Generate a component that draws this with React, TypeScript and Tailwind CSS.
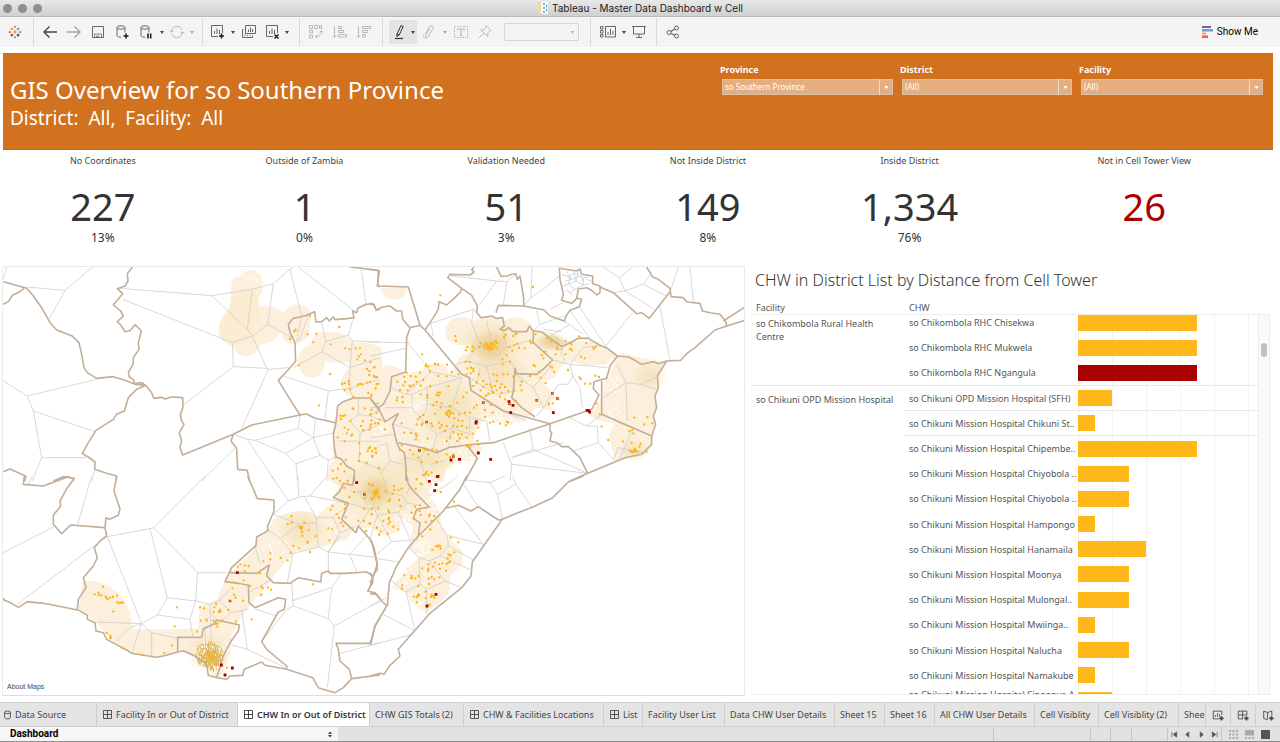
import type { ReactNode } from 'react';

type Kpi = { label: string; value: string; share?: string; alert?: boolean };
const KPIS: Kpi[] = [
  { label: 'No Coordinates', value: '227', share: '13%' },
  { label: 'Outside of Zambia', value: '1', share: '0%' },
  { label: 'Validation Needed', value: '51', share: '3%' },
  { label: 'Not Inside District', value: '149', share: '8%' },
  { label: 'Inside District', value: '1,334', share: '76%' },
  { label: 'Not in Cell Tower View', value: '26', alert: true },
];

type Row = { name: string; units: number; facility?: string; span?: number; alert?: boolean; rule?: boolean };
const ROWS: Row[] = [
  { facility: 'so Chikombola Rural Health Centre', span: 3, name: 'so Chikombola RHC Chisekwa', units: 7 },
  { name: 'so Chikombola RHC Mukwela', units: 7 },
  { name: 'so Chikombola RHC Ngangula', units: 7, alert: true, rule: true },
  { facility: 'so Chikuni OPD Mission Hospital', span: 13, name: 'so Chikuni OPD Mission Hospital (SFH)', units: 2, rule: true },
  { name: 'so Chikuni Mission Hospital Chikuni St..', units: 1, rule: true },
  { name: 'so Chikuni Mission Hospital Chipembe..', units: 7 },
  { name: 'so Chikuni Mission Hospital Chiyobola ..', units: 3 },
  { name: 'so Chikuni Mission Hospital Chiyobola ..', units: 3 },
  { name: 'so Chikuni Mission Hospital Hampongo', units: 1 },
  { name: 'so Chikuni Mission Hospital Hanamaila', units: 4 },
  { name: 'so Chikuni Mission Hospital Moonya', units: 3 },
  { name: 'so Chikuni Mission Hospital Mulongal..', units: 3 },
  { name: 'so Chikuni Mission Hospital Mwiinga..', units: 1 },
  { name: 'so Chikuni Mission Hospital Nalucha', units: 3 },
  { name: 'so Chikuni Mission Hospital Namakube', units: 1 },
  { name: 'so Chikuni Mission Hospital Singonya A', units: 2 },
];

/* ---------- map data: four tiles, each in thirds of a pixel ---------- */

type Tile = { x: number; y: number; borders: string; cells: string; sites: string; far: string; edge: string };

const NORTH_WEST: Tile = {
  x: 0,
  y: 260,
  borders:
    'M10 62L80 82L100 105L125 140L150 185L170 207L215 224L237 245L245 280L252 320L262 335L290 352L340 347L375 358L405 370L437 373M10 130L25 122L38 102L60 92L72 82M397 18L382 38L384 60L375 75L352 83L368 98L340 132L362 150L370 165L352 182L362 192L375 212L390 209L405 191L424 210L415 245L417 265L400 290L400 308L385 335L388 348L400 355L404 368L425 365L437 373L455 395L461 412L485 409L495 414L515 408L548 410L549 440L541 460L545 480L552 490L538 515L545 540L540 560L548 582L700 520L755 492L900 462M437 373L410 385L385 410L373 450L350 460L340 475L288 508L265 545L247 578L265 588L285 603L284 625L320 637L350 645L348 660M10 632L30 624L78 646L74 660M160 660L190 647L222 652L220 660M1050 18L1135 28L1133 75L1140 77M1140 145L1130 147L1118 128L1098 130L1073 142L1070 155L1058 150L1062 170L1040 173L1005 176L1000 168L988 180L980 170L965 182L948 183L944 152L915 165L880 172L865 190L870 215L885 245L887 300L875 315L835 358L868 412L900 462L920 459L945 472L975 478L1008 486M1140 452L1110 411L1060 411L1030 422L1013 435L1008 486L1000 520L1003 560L1008 588L1025 595L1040 615L1063 628L1063 660M700 520L693 540L710 562L713 625L742 628L748 660',
  cells:
    'M10 55L20 18M278 18L195 88L147 175M80 78L195 88M360 82L635 104L745 208L757 225L697 245L368 115M635 104L757 85L742 205M757 85L820 68L803 190L757 225L800 322L700 317L697 245M803 190L875 230M820 68L870 25L880 18M870 25L905 165L930 160M895 18L1063 150M1083 18L1098 130M700 317L550 432M800 322L805 325L725 502M805 325L865 320M10 360L82 405L290 355M82 405L100 450L285 512M100 450L125 590L260 590M125 590L97 660M284 628L275 660M850 345L985 390L1050 382M985 390L975 475M965 185L977 242L967 272L1050 320L1057 240L1045 222L1060 172M977 242L1045 222M967 272L880 320M1057 240L1140 243M1050 320L1140 290M1050 320L1048 382L1060 411M700 520L742 535L765 538L895 502L940 530L857 577L765 538M742 535L825 660M900 462L895 502M947 475L940 530L960 583L888 608L857 577M888 608L893 660M940 530L1000 515M960 583L985 597L1008 588M985 597L980 660M705 562L605 660M1048 382L1140 355M1075 411L1075 460L1050 480L1080 515L1140 490M1075 460L1105 465L1140 445M1013 540L1140 541M1080 515L1078 600L1140 625M905 165L890 240M925 165L895 245',
  sites:
    '930,164 882,211 887,207 922,220 949,218 940,244 870,234 1018,198 992,250 896,313 990,339 957,433 1036,262 1049,265 1067,262 1080,262 1077,286 1083,280 1072,295 1095,298 1111,304 1101,324 1108,330 1108,342 1123,319 1125,349 1131,348 1046,360 1034,366 1026,369 1047,369 1074,370 1081,368 1088,370 1101,365 1110,363 1130,369 1127,382 1034,388 1051,385 1061,408 1105,396 1115,402 1113,406 1133,427 1058,442 1060,444 1094,442 1114,447 1111,461 1021,464 1028,465 1034,463 1023,474 1051,480 1089,481 1115,478 1134,486 1034,500 1044,506 1083,495 1090,507 1111,497 1109,506 1041,517 1057,520 1054,524 1013,529 1034,541 1077,547 1110,558 1106,562 1127,563 1103,570 1128,575 1080,578 1117,585 1077,600 1100,606 1037,596 1023,609 1014,623 998,629 1034,631 1010,651 1137,621',
  far: '',
  edge: '',
};

const NORTH_EAST: Tile = {
  x: 370,
  y: 260,
  borders:
    'M0 25L28 30L22 75L115 78L150 193L165 207M150 193L120 200M0 130L12 130L18 147L38 138L60 135L80 150L95 150L98 175L120 200L110 230L107 333L65 347L60 390L40 430L25 440L0 412M312 18L305 26L312 33L300 42L240 40L233 50L275 82L272 92L255 110L230 132L207 122L205 145L190 170L165 207L275 340L298 350L303 388L400 450L540 488M275 82L305 103L322 135L320 155L333 170L365 165L378 172L398 170L403 195L390 205L405 208L415 200L430 212L470 212L478 196L490 210L490 245L548 297L525 320L500 340L440 338L435 322L430 390L425 410L455 440L495 468M380 18L393 46L412 45L425 40L437 38L442 55L450 45L461 110L461 135M378 155L385 133L461 135L522 147L540 165L583 180L588 165L600 148L628 137L635 115L620 112L605 127L575 118L580 100L570 55L568 22L620 30L630 24L635 40L668 45L668 68L690 75L690 95L680 102L668 90L650 80L625 84L620 112M690 78L730 95L800 158L815 155L838 172L900 92M830 18L848 48L862 53L900 82L903 107L940 110L950 122L970 125L990 127L997 150L1020 155L1050 160L1068 182L1070 195L1125 178M1060 180L1125 138M1070 195L1035 207L975 260L950 278L932 298L890 300L862 345L865 380L855 405L860 440L850 465L857 490L845 525L845 550L815 580L765 590L653 637L600 660M490 210L515 213L545 235L575 257L600 245L625 232L655 232L690 253L712 262L742 285L775 288L795 298L815 310L850 302L865 308L890 300M742 285L720 315L710 352L672 362L670 383L687 402L665 445L650 450L540 488L370 545L290 552L235 560L200 575L165 562L85 545M695 355L695 460L845 525M540 488L540 510L545 515L540 540L560 545L575 557L595 557L630 590L653 637M290 552L322 592L285 660M25 440L45 482L85 458L68 490L80 545L90 565L103 575L108 620L108 660',
  cells:
    'M0 243L107 245M0 285L107 262M110 240L183 333L275 350M183 333L107 400L65 380M180 188L310 145L320 155M183 188L190 225M310 145L305 185M245 45L380 60L330 130M380 60L410 62L437 40M410 62L400 133M487 18L482 110L461 135M482 110L520 85L555 55L568 45M540 145L580 125M700 18L748 50L765 90L730 95M748 50L785 20M765 90L820 70L840 40M820 70L890 105M765 90L850 143M903 85L925 18M960 18L970 125M870 135L900 298M788 155L705 258M628 137L712 262M600 150L660 232M583 180L640 220M500 150L510 190L490 210M510 190L583 165M540 225L600 190M520 205L575 212M305 185L330 250L290 300L257 310M290 300L350 315L420 300L435 322M350 315L370 395L340 410M400 205L410 260L375 290L330 250M350 180L365 250M410 260L490 235M330 320L320 370M548 297L600 310L712 320M600 310L608 345L595 370L565 370L520 440L500 465M608 345L630 380L637 440M690 253L640 260L600 310M560 250L585 300M740 310L768 365L810 370L858 350M768 365L700 410M768 365L772 480M810 370L858 385M107 400L127 400L125 440L150 470L170 450L172 380L127 400M172 380L275 350L245 440L172 430M245 440L300 470L298 520L245 500L200 520L150 470M300 470L350 480L360 540M245 500L235 560M298 350L380 400L440 390M435 340L490 380L520 440M490 380L548 310M70 490L125 505L150 545M0 465L45 482M0 440L25 440M125 440L45 440M200 520L190 565M420 455L470 480M400 545L425 610L420 660M425 610L653 637M425 590L580 545M478 500L490 565L653 637M425 590L490 565M600 470L650 495L682 495L685 545L735 600M650 495L695 460M685 545L610 570M750 590L790 500L745 485M730 595L745 560L820 575M345 420L440 470M165 565L150 600L170 660M225 600L180 610M108 590L150 600M0 530L75 520M20 560L50 545L60 600L100 610M60 600L30 640M575 40L600 48L612 35L640 50L655 48M600 48L595 70L578 75M595 70L615 85L640 72L640 50M612 35L618 60L595 70M618 60L640 72L660 68M600 95L615 85M590 30L605 55L585 60M625 30L618 60M588 85L610 105M650 55L668 62M605 55L630 45L640 60',
  sites:
    '211,103 489,78 256,225 258,239 157,280 397,208 407,221 402,228 437,219 440,217 418,258 427,269 433,252 292,258 288,268 308,256 312,262 307,270 497,220 484,246 480,240 488,244 531,232 543,240 515,282 520,292 526,272 560,260 575,265 563,265 601,246 605,250 587,241 601,264 606,268 627,226 630,230 649,247 670,260 678,257 672,263 557,280 586,280 633,287 644,292 541,316 547,320 594,327 491,312 495,316 628,349 632,354 676,344 687,348 661,368 645,368 506,333 512,350 480,345 527,366 455,362 452,373 455,388 553,332 169,310 175,316 167,316 195,309 204,311 231,311 180,330 287,303 300,303 292,322 303,320 310,323 310,330 290,340 302,337 326,340 398,310 420,302 410,283 397,295 370,340 380,343 400,340 413,340 430,347 360,370 365,378 340,378 320,365 332,388 380,388 390,380 405,378 395,370 355,397 367,392 370,395 348,403 330,405 390,407 380,360 432,387 405,415 362,432 420,430 103,347 110,335 122,345 137,347 150,335 160,357 140,363 100,373 119,374 122,377 130,372 152,374 105,363 82,362 205,345 230,346 245,333 265,340 235,376 180,375 90,387 113,388 172,402 203,395 207,403 210,395 200,402 152,400 82,410 97,408 98,423 80,418 173,410 190,432 200,423 215,427 262,425 280,408 290,395 195,458 212,440 240,435 235,450 240,460 228,456 250,457 237,467 233,455 238,448 243,454 231,462 268,460 285,455 300,455 253,472 265,478 277,480 312,440 320,432 345,447 368,455 160,462 150,468 143,475 140,490 157,487 155,492 183,487 187,495 207,485 215,492 210,500 230,495 225,510 250,495 262,497 276,495 290,500 250,513 265,520 275,520 270,532 262,540 240,530 230,540 290,530 308,518 325,500 322,540 95,487 103,515 138,518 140,525 137,535 123,516 173,533 95,553 90,567 120,567 295,552 300,560 290,555 303,552 325,550 410,482 408,493 415,485 390,488 370,482 345,468 360,485 793,470 832,468 847,487 823,490 715,537 759,541 785,545 812,548 808,557 790,573 797,570 785,572 802,572 795,563 780,570 792,568 830,572 778,510 790,517 787,507 680,428 690,460 695,497 537,428 548,427 565,415 536,430 3,460 3,490 20,455 30,475 25,487 45,505 15,487 15,562 7,570 18,575 7,587 27,622 12,345 17,382 25,368 13,318 165,565 150,570 187,565 200,568 160,562 172,567 145,590 130,580 155,603 200,603 175,580 230,580 240,588 170,632 165,640 175,642 185,635 160,642 168,637 108,627 140,655 250,580 205,645 352,250 358,255 345,252 350,262 356,262 362,258 367,252 372,245 366,262 360,248 378,240 381,246 348,247 342,256 370,262 358,268 353,256 374,254 363,265 328,258 333,247 380,262 365,247 447,260 442,248 465,262 430,225 438,420 415,390 395,395 340,360 350,370 310,375 375,375',
  far: '417,422 429,433 422,455 550,455 319,482 318,486 325,576 362,595 243,597 269,595 268,595 205,646 651,448 656,449 659,453',
  edge: '340,425 500,418 547,397 562,412 170,483 148,568 250,587 418,428',
};

const SOUTH_WEST: Tile = {
  x: 0,
  y: 475,
  borders:
    'M73 0L70 25L130 30L205 2L222 8L202 35L180 75L182 90L160 118L160 145L185 173L212 147L315 155L318 125L328 130L355 118L360 98L342 45L348 10L350 0M315 155L320 180L300 195L283 215L292 245L280 270L250 305L258 335L235 370L232 400L262 418L262 430L285 440L288 465L310 470L320 490L385 525L395 532L430 538L470 544L500 538L533 528L533 484L605 484L610 458L640 445L650 432L718 447L715 465L690 500L670 540L650 605M10 365L12 372L35 382L55 394L82 377L130 382L200 395L232 402M533 528L550 524L585 540L620 565L625 598L650 605L680 610L690 600L728 598L733 580L785 558L795 568L860 580L885 588L938 605L955 635L1005 650L1030 635L1055 608L1140 597M743 0L772 68L822 72L822 105L803 150L803 165L770 183L768 208L695 275L675 317L715 322L745 328L747 380L765 395L800 380L835 365L857 370L853 400L835 408L785 497L800 520L860 570L860 580M685 290L770 292L808 267L800 300L820 320L870 322L895 305L962 318L965 292L985 285L990 292L1035 292L1100 288L1120 300M1055 608L1048 580L1020 555L1015 520L1008 502L1113 502L1125 450L1140 425M1062 0L1058 28L1030 22L1020 45L1000 65L1045 82L1025 130L1068 170L1075 150L1115 195L1130 260L1132 280L1118 300L1118 320L1103 345L1125 350L1140 370',
  cells:
    'M10 230L160 153M52 385L315 185M275 0L233 145M97 0L85 25M615 0L460 155L450 158L322 182L425 443L290 438M450 158L502 365L472 417L425 443L455 470L455 540M460 155L593 290L587 375L502 365M593 290L680 290M587 375L630 385L660 372L690 340M587 375L570 430L472 417M570 430L578 480M425 443L390 455L350 495M425 443L397 528M455 470L533 487M660 372L692 410L660 440L630 410L630 385M692 410L745 400M725 402L742 520L690 505M742 520L855 575M630 410L635 530M615 450L618 540M815 0L865 75L820 115M865 75L897 63L893 0M897 63L930 60L1045 82M930 60L980 0M820 115L900 145L948 140M900 145L840 187L803 160M915 65L948 125L955 213L878 233L840 187M948 125L1000 125L1035 95M1000 125L1020 170L985 228L955 213M1020 170L1068 150M878 233L862 320M985 228L985 290M985 228L1048 235L1100 180M985 228L1020 180M1048 235L1070 285M1048 235L1120 243M875 320L880 390L860 400L790 490M880 390L985 428L1003 450L1140 375M875 375L995 335L1025 292M995 335L985 428M1003 450L982 635M1018 533L1140 500M765 210L780 265M768 400L830 420M745 350L815 310M1045 82L1110 100L1140 90M1075 40L1105 95M1110 100L1075 150M1062 50L1140 40',
  sites:
    '1000,8 1020,15 1043,15 1033,35 997,90 992,101 875,120 863,145 875,140 913,140 904,155 907,152 901,155 899,152 904,159 906,168 926,163 907,180 946,181 985,157 996,160 988,193 922,197 924,200 880,210 897,217 930,228 872,230 863,253 842,246 811,232 811,250 790,256 721,265 735,268 746,270 713,272 734,286 775,290 780,292 702,319 731,313 750,330 697,337 702,356 707,365 729,374 785,332 788,337 804,335 813,341 782,358 785,355 531,394 524,451 600,394 612,397 648,384 643,394 660,402 662,406 656,408 641,408 685,402 602,434 620,431 620,434 640,434 667,433 652,442 648,444 652,452 708,436 755,430 591,467 516,508 493,531 425,536 367,516 320,471 331,479 330,486 332,486 309,332 284,355 296,350 296,358 304,358 317,362 320,366 330,365 339,363 351,359 323,370 351,379 358,381 363,380 368,380 340,406 939,325 681,575 1062,48 1048,63 1035,85 1107,24 1117,28 1095,67 1115,68 1125,55 1130,50 1137,65 1093,98 1115,115 1075,134 1092,135 1108,142 1131,155 1098,165 1137,175 1010,115 1017,126 1037,124 1035,98 1030,150 1023,140 625,540 632,545 630,535 638,542 640,535 645,548 615,535 636,552',
  far: '1070,20 712,290 664,567 697,576 675,597',
  edge: '1093,55 690,375',
};

const SOUTH_EAST: Tile = {
  x: 370,
  y: 475,
  borders:
    'M0 190L12 215L22 265L10 300L0 333M0 290L8 305L0 320M0 353L20 355L35 375L50 390L15 450L0 505M110 0L115 25L130 45L178 93L140 100L130 128L150 140L145 180M290 0L270 40L220 105L145 180L115 215L80 270L58 320L52 390M230 96L265 88L303 105L325 92L385 132L397 130L440 112L490 92L548 65L595 18L640 0M397 130L307 258L303 300L275 335L180 412L85 520L90 540L60 568L42 595L30 592L0 600',
  cells:
    'M290 12L360 20L405 0M360 20L383 55L397 130M383 55L438 25L485 92M428 0L438 25M280 25L325 92M253 92L340 205L232 178L200 130M232 178L235 210L310 252M235 210L210 240L302 282M210 240L178 255L225 315L275 335M178 255L147 245L115 215M147 245L150 325L170 340L225 315M170 340L170 415M150 325L108 347L65 315M108 347L135 465L40 415M0 508L130 475M0 390L50 365M20 235L65 197L145 190M22 118L65 197M22 118L0 190M22 118L85 108L110 80L150 88M85 108L120 190M22 248L85 258M110 80L100 60L50 50L40 0M22 118L0 60M175 60L240 20L262 0M110 55L120 30',
  sites:
    '8,28 10,50 15,45 20,42 23,48 17,55 25,60 22,52 12,62 7,70 17,48 13,55 47,45 72,30 73,42 85,43 95,38 60,70 57,75 68,53 87,72 91,90 25,98 55,103 57,108 5,98 5,115 1,143 40,135 55,130 55,143 60,137 57,125 20,155 32,166 28,176 70,152 85,160 53,173 140,10 155,25 137,38 152,23 212,48 252,77 135,92 150,88 125,110 148,105 152,117 177,120 180,115 193,120 130,127 167,138 185,135 181,160 157,181 242,185 265,199 187,221 197,211 205,208 203,212 210,210 212,218 235,235 240,238 233,247 253,229 242,238 240,257 235,260 230,264 195,260 207,265 217,262 190,272 175,265 157,277 175,278 174,284 210,278 228,284 103,298 124,300 123,307 126,307 136,307 146,300 176,308 185,303 193,310 208,304 177,324 145,330 97,328 96,338 167,347 145,355 147,358 140,363 131,362 143,360 167,367 185,357 190,360 183,363 193,365 140,379 179,386 208,2',
  far: '178,16 202,2 198,26 194,44 198,355 171,390',
  edge: '',
};

const TILES = [NORTH_WEST, NORTH_EAST, SOUTH_WEST, SOUTH_EAST];

const COVERAGE: { x: number; y: number; d: string }[] = [
  {
    x: 0,
    y: 260,
    d: 'M695 65Q700 40 725 45Q730 25 755 28Q790 32 788 70Q795 90 775 110L778 135Q820 130 848 155Q880 118 920 138Q940 160 930 190Q935 235 905 240Q880 260 855 240Q845 225 843 210Q820 250 780 250Q770 288 735 286Q705 280 695 255Q650 240 655 200Q662 165 685 145Q695 110 692 90ZM893 300Q900 258 930 250Q940 208 990 212Q1040 212 1057 245Q1110 240 1145 262L1145 660L985 660Q980 615 1000 600L1000 490Q1010 430 1045 420L1055 408Q1020 395 1022 360Q1030 335 1048 320L1045 303Q1010 310 975 300Q975 350 930 350Q895 340 893 300Z',
  },
  {
    x: 370,
    y: 260,
    d: 'M32 82L112 82Q105 115 75 116Q38 115 32 82ZM0 250Q35 255 37 290L37 318Q65 305 90 325L107 340L160 325Q180 300 210 305Q235 318 238 340L262 310L265 290L300 275Q300 255 300 248Q260 262 232 235Q215 200 240 180Q275 155 310 180Q360 150 398 180Q440 155 485 190L490 205Q540 205 580 240L680 240L740 282L710 310L650 315L600 300L570 320L555 350L520 360L575 430L560 450L500 440L460 480L410 495L350 470L320 500L310 540L340 560L320 600L260 600L230 625L220 662L0 662ZM742 285Q760 265 785 285L885 303L862 345L865 380L855 405L860 440L850 465L855 490L845 550L815 580L735 600L718 520L735 485L690 480L655 465L690 420L697 370L715 345Z',
  },
  {
    x: 0,
    y: 475,
    d: 'M983 0L1145 0L1145 150L1060 160L1040 190L960 215L885 228L845 270L800 330L760 375L720 430L695 480L690 540L660 605L640 605L620 565L585 540L540 520L500 540L400 536L340 500L290 440L235 400L250 315Q300 310 340 340Q390 370 398 460L540 460L595 455L598 390L650 372L670 320L720 265L765 215L770 185L803 170L820 130Q860 105 910 105Q940 110 950 120Q990 80 1020 75L1000 62L1020 30Q990 20 983 0Z',
  },
  {
    x: 370,
    y: 475,
    d: 'M0 0L195 0L175 60L210 100L215 150L238 190L278 225L278 265L240 300L238 350L200 390L165 410L118 375L110 350L65 335L95 300L110 275L150 245L115 215L130 150L100 130L85 165L50 180L0 155Z',
  },
];

/* centre, spread and number of specks in a cluster */
type Cluster = [number, number, number, number, number];

/* bare patches inside the coverage */
const GAPS: Cluster[] = [
  [418, 405, 12, 6, 40],
  [500, 420, 22, 8, 120],
  [563, 378, 22, 12, 90],
  [590, 392, 14, 16, 90],
  [575, 402, 16, 9, 80],
  [613, 383, 12, 9, 50],
  [612, 410, 8, 10, 34],
  [470, 458, 14, 9, 80],
  [436, 505, 12, 10, 60],
  [420, 545, 10, 10, 70],
  [402, 575, 10, 14, 50],
  [412, 600, 10, 9, 34],
  [404, 518, 9, 8, 40],
  [380, 428, 8, 8, 24],
  [275, 545, 14, 10, 26],
  [200, 645, 10, 6, 14],
  [226, 655, 5, 16, 20],
  [455, 445, 15, 10, 60],
  [248, 276, 16, 8, 40],
];

const OVERLAPS: Cluster[] = [
  [209, 654, 14, 13, 420],
  [212, 661, 7, 9, 90],
];

function specks(clusters: Cluster[]): string {
  let state = 11;
  const next = () => {
    state = (state + 0x6d2b79f5) | 0;
    let t = Math.imul(state ^ (state >>> 15), 1 | state);
    t = (t + Math.imul(t ^ (t >>> 7), 61 | t)) ^ t;
    return ((t ^ (t >>> 14)) >>> 0) / 4294967296;
  };
  return clusters
    .map(([x, y, rx, ry, n]) =>
      Array.from({ length: n }, () => {
        const angle = next() * Math.PI * 2;
        const reach = Math.pow(next(), 0.6);
        return `M${Math.round(x + Math.cos(angle) * rx * reach)} ${Math.round(y + Math.sin(angle) * ry * reach)}h1`;
      }).join(''),
    )
    .join('');
}

const HEAT: [number, number, number, number, string][] = [
  [491, 345, 22, 17, 'url(#heat-mid)'],
  [491, 345, 34, 28, 'url(#heat-low)'],
  [552, 341, 18, 9, 'url(#heat-mid)'],
  [450, 412, 34, 40, 'url(#heat-low)'],
  [500, 372, 32, 22, 'url(#heat-low)'],
  [376, 491, 18, 17, 'url(#heat-mid)'],
  [380, 488, 50, 32, 'url(#heat-low)'],
  [302, 528, 26, 20, 'url(#heat-low)'],
  [650, 375, 18, 15, 'url(#heat-low)'],
  [634, 450, 16, 12, 'url(#heat-low)'],
  [425, 460, 34, 16, 'url(#heat-low)'],
  [209, 652, 24, 20, 'url(#heat-low)'],
];

const dots = (list: string) =>
  list
    .split(' ')
    .filter(Boolean)
    .map((p) => `M${p.replace(',', ' ')}h0.01`)
    .join('');

const place = (t: { x: number; y: number }) => `translate(${t.x} ${t.y}) scale(0.33333)`;

function CoverageMap() {
  return (
    <svg viewBox="3 266 741 428" className="block h-auto w-full" role="img" aria-label="Map of community health workers and cell tower coverage">
      <defs>
        <radialGradient id="heat-low">
          <stop offset="0" stopColor="#ecd193" stopOpacity="0.45" />
          <stop offset="0.6" stopColor="#ecd193" stopOpacity="0.25" />
          <stop offset="1" stopColor="#ecd193" stopOpacity="0" />
        </radialGradient>
        <radialGradient id="heat-mid">
          <stop offset="0" stopColor="#dcb04c" stopOpacity="0.6" />
          <stop offset="0.6" stopColor="#dfb968" stopOpacity="0.35" />
          <stop offset="1" stopColor="#e2c27a" stopOpacity="0" />
        </radialGradient>
      </defs>
      {COVERAGE.map((c) => (
        <path key={`${c.x}-${c.y}`} d={c.d} transform={place(c)} fill="#fcf0dc" />
      ))}
      <path d="M234 290L256 290L259 312L252 335L238 344L222 338L220 322L230 308Z" fill="#fbecd2" />
      {HEAT.map(([cx, cy, rx, ry, fill], i) => (
        <ellipse key={i} cx={cx} cy={cy} rx={rx} ry={ry} fill={fill} />
      ))}
      <path d={specks(OVERLAPS)} stroke="#d3a12c" strokeOpacity="0.7" strokeWidth="1.6" />
      <ellipse cx="566" cy="380" rx="12" ry="10" fill="#fff" />
      <ellipse cx="579" cy="391" rx="12" ry="13" fill="#fff" />
      <ellipse cx="562" cy="404" rx="12" ry="8" fill="#fff" />
      <path d={specks(GAPS)} stroke="#fff" strokeWidth="1.4" />
      {TILES.map((t) => (
        <path key={`c${t.x}-${t.y}`} d={t.cells} transform={place(t)} fill="none" stroke="#cccccc" strokeWidth="2.3" />
      ))}
      {TILES.map((t) => (
        <path key={`b${t.x}-${t.y}`} d={t.borders} transform={place(t)} fill="none" stroke="#c2ae99" strokeWidth="4.8" strokeLinejoin="round" />
      ))}
      {TILES.map((t) => (
        <g key={`s${t.x}-${t.y}`} transform={place(t)} strokeLinecap="round">
          <path d={dots(t.sites)} stroke="#fdb414" strokeWidth="7" />
          <path d={dots(t.far)} stroke="#a90000" strokeWidth="8.5" strokeLinecap="square" />
          <path d={dots(t.edge)} stroke="#b8440a" strokeWidth="8" strokeLinecap="square" />
          <path d={dots(t.edge)} stroke="#f59a28" strokeWidth="4.5" />
        </g>
      ))}
    </svg>
  );
}

/* ---------- toolbar ---------- */

function Glyph({ children, tone = 'text-[#666]' }: { children: ReactNode; tone?: string }) {
  return (
    <svg viewBox="0 0 16 16" className={`size-4 ${tone}`} fill="none" stroke="currentColor" strokeWidth="1" aria-hidden="true">
      {children}
    </svg>
  );
}

function Tool({ label, width = 'w-6', children }: { label: string; width?: string; children: ReactNode }) {
  return (
    <button type="button" aria-label={label} className={`flex h-6 shrink-0 items-center justify-center ${width}`}>
      {children}
    </button>
  );
}

function Caret({ label, faded }: { label: string; faded?: boolean }) {
  return (
    <button type="button" aria-label={label} className="flex h-6 w-2 shrink-0 items-center justify-center">
      <svg viewBox="0 0 4 3" className={`h-[3px] w-1 ${faded ? 'text-[#aaa]' : 'text-[#444]'}`} aria-hidden="true">
        <path d="M0 0h4L2 3z" fill="currentColor" />
      </svg>
    </button>
  );
}

const Divider = () => <span className="h-7 w-px shrink-0 bg-[#d9d9d9]" />;
const FADED = 'text-[#b9b9b9]';

function Toolbar() {
  return (
    <div className="flex h-[30px] items-center bg-[#f4f4f4]">
      <Tool label="Start page" width="ml-[3px] w-6">
        <svg viewBox="0 0 16 16" className="size-[14px]" strokeWidth="1.4" aria-hidden="true">
          <path d="M8 6v4M6 8h4" stroke="#eb912c" />
          <path d="M4.500 3v3M3 4.500h3" stroke="#eb912c" />
          <path d="M11.500 3v3M10 4.500h3" stroke="#7099a6" />
          <path d="M4.500 10v3M3 11.500h3" stroke="#c72037" />
          <path d="M11.500 10v3M10 11.500h3" stroke="#1f457e" />
          <path d="M8 1v2M7 2h2" stroke="#7b6e9c" />
          <path d="M8 13v2M7 14h2" stroke="#7b6e9c" />
          <path d="M2 7v2M1 8h2" stroke="#c72037" />
          <path d="M14 7v2M13 8h2" stroke="#5b6591" />
        </svg>
      </Tool>
      <span className="w-1.5" />
      <Divider />
      <span className="w-1" />
      <Tool label="Back"><Glyph tone="text-[#444]"><path strokeWidth="1.4" d="M15 8H2M7.500 2.500L2 8l5.500 5.500" /></Glyph></Tool>
      <Tool label="Forward"><Glyph tone="text-[#a5a5a5]"><path strokeWidth="1.4" d="M1 8h13M8.500 2.500L14 8l-5.500 5.500" /></Glyph></Tool>
      <Tool label="Save"><Glyph><path d="M2.500 2.500h11v11h-11z" /><path strokeWidth="0.8" d="M4.500 13.500v-3.500h7v3.500M6.500 13.500v-1.500h2v1.500" /></Glyph></Tool>
      <Tool label="New data source">
        <Glyph><ellipse cx="7" cy="3.500" rx="4" ry="1.700" /><path d="M3 3.500v8c0 1 1.800 1.700 4 1.700M11 3.500v5" /><path d="M12 9.500v5M9.500 12h5" strokeWidth="1.600" stroke="#222" /></Glyph>
      </Tool>
      <Tool label="Pause auto updates">
        <Glyph><ellipse cx="7" cy="3.500" rx="4" ry="1.700" /><path d="M3 3.500v8c0 1 1.800 1.700 4 1.700M11 3.500v5" /><path d="M10 9.500v5M12.700 9.500v5" strokeWidth="1.600" stroke="#222" /></Glyph>
      </Tool>
      <Caret label="Update options" />
      <Tool label="Run update" width="w-[22px]">
        <Glyph tone={FADED}><path d="M2.500 8a5.500 5.500 0 0 1 10.500-2.300M13.500 8A5.500 5.500 0 0 1 3 10.300M1 6.500L2.500 8.500 4.500 6.500M11.500 9.500l2-2 1.700 2" /></Glyph>
      </Tool>
      <Caret label="Run options" faded />
      <span className="w-1.5" />
      <Divider />
      <span className="w-0.5" />
      <Tool label="New worksheet"><Glyph><path d="M9 12.500H2.500v-11h11V9" /><path d="M5.500 10V7M8 10V4.500M10.500 10V6" /><path d="M12.500 9.500v5M10 12h5" strokeWidth="1.600" stroke="#222" /></Glyph></Tool>
      <Caret label="New sheet options" />
      <Tool label="Duplicate"><Glyph><path d="M4.500 1.500h10v8h-10zM2.500 5.500h-1v8h10v-2" /><path d="M7.500 8V5.500M9.500 8V3.500M11.500 8V5M4 12v-1.500M6.500 12v-1M9 12v-1" /></Glyph></Tool>
      <Tool label="Clear sheet" width="w-[22px]"><Glyph><path d="M9 12.500H2.500v-11h11V9" /><path d="M5.500 10V7M8 10V4.500M10.500 10V6" /><path d="M10.500 10.500l4 4M14.500 10.500l-4 4" strokeWidth="1.600" stroke="#222" /></Glyph></Tool>
      <Caret label="Clear options" />
      <span className="w-2" />
      <Divider />
      <span className="w-1" />
      <Tool label="Swap rows and columns"><Glyph tone={FADED}><path d="M1.500 1.500h3v3h-3zM6.500 1.500h3v3h-3zM11.500 1.500h2v3h-2zM1.500 6.500h3v2.500h-3zM1.500 11h3v3h-3zM13.500 7c0 4-2 5.500-6 5.500M11.500 8.500l2-2 1.500 2M9.500 10.500l-2 2 2 2" /></Glyph></Tool>
      <Tool label="Sort ascending"><Glyph tone={FADED}><path d="M2.500 2v11M.800 11.500L2.500 13.500l1.700-2M6.500 2.500h3v2h-3zM6.500 6.500h5v2h-5zM6.500 10.500h8v2.500h-8z" /></Glyph></Tool>
      <Tool label="Sort descending"><Glyph tone={FADED}><path d="M2.500 2v11M.800 11.500L2.500 13.500l1.700-2M6.500 2.500h8v2h-8zM6.500 6.500h5v2h-5zM6.500 10.500h3v2.500h-3z" /></Glyph></Tool>
      <span className="w-1.5" />
      <Divider />
      <span className="w-1.5 flex-none" />
      <span className="flex shrink-0 rounded-xs bg-[#e4e4e4]">
        <Tool label="Highlight" width="w-5"><Glyph tone="text-[#333]"><path d="M6 10L10 1.500l2.200 1-4 8.500-2.400 1.500zM6 10l2.200 1" /><path strokeWidth="1.200" d="M4 14.500h8" /></Glyph></Tool>
        <Caret label="Highlight options" />
      </span>
      <Tool label="Group members"><Glyph tone={FADED}><path d="M4.500 9.500l4-6.500c1.500-2.500 5-1 3.500 1.800L7.500 12c-1.200 2-3.800.800-2.800-1.200L9 4.500M2.500 11.500c-.5 2.500 2.500 3.500 4 1.500" /></Glyph></Tool>
      <Caret label="Group options" faded />
      <Tool label="Show mark labels"><Glyph tone={FADED}><path strokeDasharray="1.500 1" d="M1.500 2.500h13v11h-13z" /><path strokeWidth="1.200" d="M5 6.500V5h6v1.500M8 5v6.500M6.500 11.500h3" /></Glyph></Tool>
      <Tool label="Fix axes"><Glyph tone={FADED}><path d="M9 1.500l5 5-1.500.5-2 2.500.5 3L3.500 6l3 .2L8.500 3.500zM6.500 9.500L2 14" /></Glyph></Tool>
      <span className="w-[7px]" />
      <label className="relative flex items-center">
        <span className="sr-only">Fit</span>
        <select className="h-[18px] w-[75px] appearance-none rounded-xs border border-[#d4d4d4] bg-[#f4f4f4]">
          <option aria-label="None"></option>
        </select>
        <svg viewBox="0 0 4 3" className="pointer-events-none absolute right-1 h-[3px] w-[5px] text-[#bbb]" aria-hidden="true"><path d="M0 0h4L2 3z" fill="currentColor" /></svg>
      </label>
      <span className="w-[11px]" />
      <Divider />
      <span className="w-[5px]" />
      <Tool label="Show or hide cards"><Glyph><path d="M.500 2.500h2.500v2.500H.500zM.500 6.500h2.500v2.500H.500zM.500 10.500h2.500v2.500H.500zM5.500 2.500h10v10.500h-10z" /><path d="M8 11V8M10.500 11V5M13 11V7" /></Glyph></Tool>
      <Caret label="Card options" />
      <Tool label="Presentation mode" width="w-[22px]"><Glyph><path d="M1 2.500h14M2.500 2.500v7.500h11V2.500M8 10v3.500M5 13.500h6" /></Glyph></Tool>
      <span className="w-1.5" />
      <Divider />
      <span className="w-1" />
      <Tool label="Share"><Glyph><circle cx="4" cy="8.500" r="2" /><circle cx="11.500" cy="4" r="2" /><circle cx="11.500" cy="12" r="2" /><path strokeWidth="1.300" d="M5.800 7.500L9.800 5M5.800 9.500l4 1.600" /></Glyph></Tool>
      <button type="button" className="mr-[22px] ml-auto flex items-center gap-1 text-[10px] leading-3 text-black">
        <svg viewBox="0 0 11 12" className="h-3 w-[11px]" aria-hidden="true">
          <path d="M0 0h9v2H0z" fill="#7b6594" /><path d="M0 3h11v2.500H0z" fill="#6f9fcf" /><path d="M0 6.500h4v2H0z" fill="#f4a07c" /><path d="M0 9.500h6v2.500H0z" fill="#f0566c" />
        </svg>
        Show Me
      </button>
    </div>
  );
}

/* ---------- page sections ---------- */

function Filter({ label, value, className }: { label: string; value: string; className: string }) {
  return (
    <label className={`flex flex-col text-[9px] leading-3 font-bold text-white ${className}`}>
      {label}
      <span className="relative mt-[3px] ml-0.5 block">
        <select className="block h-4 w-full appearance-none border border-[#dcc0a4] bg-[#e5ae81] pl-0.5 text-[8px] leading-3 font-normal text-white">
          <option>{value}</option>
        </select>
        <span className="pointer-events-none absolute inset-y-0 right-0 flex w-3.5 items-center justify-center border-l border-[#f1dcc8]">
          <svg viewBox="0 0 6 4" className="h-[3px] w-[5px]" aria-hidden="true"><path d="M0 0h6L3 4z" fill="#fff" /></svg>
        </span>
      </span>
    </label>
  );
}

function DistanceTable() {
  return (
    <section className="flex min-w-0 flex-col pr-2.5 pl-1.5 font-['Noto_Sans',sans-serif] text-[9px] leading-[13px] text-[#555]">
      <h2 className="mt-1 h-[31px] pl-1 text-[16px] leading-5 font-light text-[#333]">
        CHW in District List by Distance from Cell Tower
      </h2>
      <div className="flex h-[13px] leading-[13px]">
        <span className="w-[153px] pl-[5px]">Facility</span>
        <span className="pl-[5px]">CHW</span>
      </div>
      <div className="flex h-[381px] overflow-hidden border-y border-[#eee]">
        <div className="min-w-0 flex-1 overflow-hidden">
          <table className="-mt-[5px] h-[403px] w-full table-fixed border-separate border-spacing-0">
            <caption className="sr-only">Distance from cell tower by worker</caption>
            <colgroup>
              <col className="w-[153px]" />
              <col className="w-[174px]" />
              <col />
            </colgroup>
            <tbody>
              {ROWS.map((r, i) => {
                const last = i === ROWS.length - 1;
                const line = r.rule ? 'shadow-[inset_0_-1px_#e8e8e8]' : '';
                return (
                  <tr key={i} className="h-[25px]">
                    {r.facility && (
                      <td rowSpan={r.span} className={`pt-[7px] pr-1 pl-[5px] align-top ${i === 0 ? 'shadow-[inset_0_-1px_#e8e8e8]' : ''}`}>
                        {r.facility}
                      </td>
                    )}
                    <td className={`overflow-hidden p-0 pl-[5px] whitespace-nowrap ${last ? 'align-top' : 'align-middle'} ${line}`}>{r.name}</td>
                    <td
                      className={`bg-[repeating-linear-gradient(to_right,#f2f2f2_0,#f2f2f2_1px,transparent_1px,transparent_34px)] p-0 align-middle ${line}`}
                    >
                      <div className={`h-4 ${r.alert ? 'bg-[#a90000]' : 'bg-[#ffb81a]'}`} style={{ width: r.units * 17 }} />
                    </td>
                  </tr>
                );
              })}
            </tbody>
          </table>
        </div>
        <div className="flex w-3 shrink-0 justify-center border-x border-[#ececec] bg-[#fafafa] pt-7">
          <span className="h-3.5 w-1.5 rounded-full bg-[#c1c1c1]" />
        </div>
      </div>
    </section>
  );
}

const GridIcon = () => (
  <svg viewBox="0 0 10 10" className="size-[9px] shrink-0" fill="none" stroke="currentColor" aria-hidden="true">
    <path d="M.5.5h9v9h-9zM5 .5v9M.5 5h9" />
  </svg>
);

const DataIcon = () => (
  <svg viewBox="0 0 8 10" className="h-2.5 w-[7px] shrink-0" fill="none" stroke="currentColor" aria-hidden="true">
    <ellipse cx="4" cy="2" rx="3.300" ry="1.500" />
    <path d="M.700 2v6c0 2 6.600 2 6.600 0V2" />
  </svg>
);

const TABS: { label: string; width: string; icon?: 'grid' | 'data'; active?: boolean }[] = [
  { label: 'Data Source', width: 'w-[97px] pl-1', icon: 'data' },
  { label: 'Facility In or Out of District', width: 'w-[141px] pl-1.5', icon: 'grid' },
  { label: 'CHW In or Out of District', width: 'w-[132px] pl-1.5', icon: 'grid', active: true },
  { label: 'CHW GIS Totals (2)', width: 'w-[94px] pl-[5px]' },
  { label: 'CHW & Facilities Locations', width: 'w-[140px] pl-1.5', icon: 'grid' },
  { label: 'List', width: 'w-[39px] pl-1.5', icon: 'grid' },
  { label: 'Facility User List', width: 'w-[82px] pl-[5px]' },
  { label: 'Data CHW User Details', width: 'w-[110px] pl-[5px]' },
  { label: 'Sheet 15', width: 'w-[50px] pl-[5px]' },
  { label: 'Sheet 16', width: 'w-[50px] pl-[5px]' },
  { label: 'All CHW User Details', width: 'w-[100px] pl-[5px]' },
  { label: 'Cell Visiblity', width: 'w-16 pl-[5px]' },
  { label: 'Cell Visiblity (2)', width: 'w-20 pl-[5px]' },
  { label: 'Sheet 17', width: 'w-16 pl-[5px]' },
];

function SheetTabs() {
  return (
    <nav className="flex h-6 border-t border-[#d0d0d0] bg-[#e4e4e4] font-['Noto_Sans',sans-serif] text-[9px] text-[#444]">
      <div className="flex min-w-0 flex-1 overflow-hidden">
        {TABS.map((t) => (
          <button
            key={t.label}
            type="button"
            className={`flex h-full shrink-0 items-center gap-1 border-r border-[#cfcfcf] whitespace-nowrap ${t.width} ${t.active ? 'bg-white font-semibold text-[#333]' : ''}`}
          >
            {t.icon === 'grid' && <GridIcon />}
            {t.icon === 'data' && <DataIcon />}
            {t.label}
          </button>
        ))}
      </div>
      {[
        { label: 'New worksheet', d: 'M8 11.500H1.500v-9h10V7M4 9V7M6.500 9V5M9 9V6' },
        { label: 'New dashboard', d: 'M7 11.500H1.500v-9h10V7M6.500 2.500v9M1.500 7h10' },
        { label: 'New story', d: 'M6.500 4L2 2.500v8.500l4.500 1.500M6.500 12V4l5-1.500V8' },
      ].map((b) => (
        <button key={b.label} type="button" aria-label={b.label} className="flex w-[25px] items-center justify-center border-l border-[#cfcfcf]">
          <svg viewBox="0 0 14 14" className="size-3" fill="none" stroke="currentColor" aria-hidden="true">
            <path d={b.d} />
            <path d="M11 8.500v5M8.500 11h5" strokeWidth="2" />
          </svg>
        </button>
      ))}
    </nav>
  );
}

function StatusBar() {
  return (
    <footer className="flex h-4 border-t border-b border-t-[#cfcfcf] border-b-[#8f8f8f] bg-[#e2e2e2] text-[#555]">
      <button type="button" className="flex w-[338px] items-center justify-between bg-[#f6f6f6] pr-1.5 pl-2.5 text-[10px] leading-3 font-bold text-black">
        Dashboard
        <svg viewBox="0 0 4 6" className="h-[7px] w-1" aria-hidden="true"><path d="M0 2.500h4L2 0zM0 3.500h4L2 6z" fill="#445" /></svg>
      </button>
      <span className="flex-1 border-r border-[#c6c6c6]" />
      <span className="w-[97px] border-r border-[#c6c6c6]" />
      <span className="w-5 border-r border-[#c6c6c6]" />
      <span className="w-[21px] border-r border-[#c6c6c6]" />
      <span className="w-9 border-r border-[#c6c6c6]" />
      <div className="flex w-[54px] items-center justify-around border-r border-[#c6c6c6]">
        {[
          { label: 'First sheet', d: 'M1 1v6M6.500 1L2.500 4l4 3z' },
          { label: 'Previous sheet', d: 'M5.500 1L2 4l3.500 3z' },
          { label: 'Next sheet', d: 'M2.500 1L6 4L2.500 7z' },
          { label: 'Last sheet', d: 'M7 1v6M1.500 1L5.500 4l-4 3z' },
        ].map((b) => (
          <button key={b.label} type="button" aria-label={b.label}>
            <svg viewBox="0 0 8 8" className="size-[7px]" fill="currentColor" stroke="currentColor" strokeWidth="0.8" aria-hidden="true"><path d={b.d} /></svg>
          </button>
        ))}
      </div>
      <div className="flex w-[58px] items-center justify-start gap-[7px] pl-[7px]">
        <button type="button" aria-label="Sheet sorter">
          <svg viewBox="0 0 9 9" className="size-[9px]" fill="#aaa" aria-hidden="true">
            <path d="M0 0h2v2H0zM3.500 0h2v2h-2zM7 0h2v2H7zM0 3.500h2v2H0zM3.500 3.500h2v2h-2zM7 3.500h2v2H7zM0 7h2v2H0zM3.500 7h2v2h-2zM7 7h2v2H7z" />
          </svg>
        </button>
        <button type="button" aria-label="Filmstrip">
          <svg viewBox="0 0 9 9" className="size-[9px]" fill="#aaa" aria-hidden="true"><path d="M0 0h9v5.500H0zM0 7h2v2H0zM3.500 7h2v2h-2zM7 7h2v2H7z" /></svg>
        </button>
        <button type="button" aria-label="Sheet view" className="size-[9px] bg-[#555]" />
      </div>
    </footer>
  );
}

export default function App() {
  return (
    <div className="flex min-h-screen flex-col overflow-hidden bg-white font-['Roboto','Liberation_Sans',sans-serif]">
      <header className="flex h-[17px] items-center border-b border-[#b9b9b9] bg-linear-to-b from-[#e8e8e8] to-[#d0d0d0] px-[3px]">
        <div className="flex flex-1 gap-1.5">
          <span className="size-[9px] rounded-full bg-[#8e8d93]" />
          <span className="size-[9px] rounded-full bg-[#8e8d93]" />
          <span className="size-[9px] rounded-full bg-[#8e8d93]" />
        </div>
        <h1 className="flex items-center gap-[3px] font-['Inter',sans-serif] text-[10px] leading-4 font-normal text-[#222]">
          <svg viewBox="0 0 12 12" className="size-3" aria-hidden="true">
            <path d="M1 0h10v12H1z" fill="#f7fafc" /><path d="M1 0h3v12H1z" fill="#ecd9a0" />
            <path d="M7 1v2M6 2h2M7 5v2M6 6h2M7 9v2M6 10h2M9.500 3v2M9 4h1.500M9.500 7v2M9 8h1.500" stroke="#5b9bd0" />
          </svg>
          Tableau - Master Data Dashboard w Cell
        </h1>
        <div className="flex-1" />
      </header>
      <Toolbar />

      <main className="flex flex-1 flex-col pt-1.5">
        <section className="mr-[7px] ml-[3px] flex h-[97px] justify-between border-y border-y-[#c96a1b] bg-[#d2711e] font-['Noto_Sans',sans-serif] text-white">
          <div className="pt-[21px] pl-[7px]">
            <p className="text-[24px] leading-[30px]">GIS Overview for so Southern Province</p>
            <p className="text-[19px] leading-[27px]">District:&nbsp; All,&nbsp; Facility:&nbsp; All</p>
          </div>
          <div className="flex gap-[7px] pt-2.5 pr-2.5">
            <Filter label="Province" value="so Southern Province" className="w-[173px]" />
            <Filter label="District" value="(All)" className="w-[172px]" />
            <Filter label="Facility" value="(All)" className="w-[184px]" />
          </div>
        </section>

        <section className="mx-0.5 grid grid-cols-[202fr_202fr_202fr_202fr_202fr_268fr] font-['Noto_Sans',sans-serif] text-[#333]">
          {KPIS.map((k) => (
            <div key={k.label} className="flex h-[116px] flex-col items-center pt-1">
              <p className="text-[9px] leading-[14px] text-[#444]">{k.label}</p>
              <p className={`mt-3.5 text-[38px] leading-[48px] ${k.alert ? 'text-[#a90000]' : ''}`}>{k.value}</p>
              {k.share && <p className="text-[12px] leading-4">{k.share}</p>}
            </div>
          ))}
        </section>

        <div className="ml-0.5 grid grid-cols-[743fr_535fr]">
          <section className="relative self-start border border-[#eaeaea] border-b-[#ddd]">
            <CoverageMap />
            <a href="#about-maps" className="absolute bottom-0.5 left-1 font-['Liberation_Sans',sans-serif] text-[7px] leading-3 text-[#444]">About Maps</a>
          </section>
          <DistanceTable />
        </div>
      </main>

      <div className="mt-1.5">
        <SheetTabs />
        <StatusBar />
      </div>
    </div>
  );
}
